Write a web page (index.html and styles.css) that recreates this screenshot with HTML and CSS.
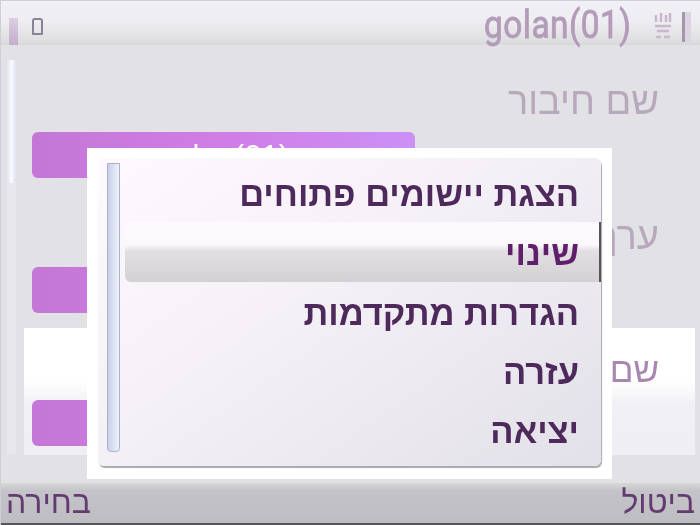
FILE: index.html
```html
<!DOCTYPE html>
<html lang="he">
<head>
<meta charset="utf-8">
<title>Menu</title>
<link rel="stylesheet" href="styles.css">
</head>
<body>
<div class="screen">
  <header class="topbar">
    <div class="top-left">
      <span class="signal"></span>
      <span class="lock"></span>
    </div>
    <div class="top-right">
      <span class="title">golan(01)</span>
      <svg class="net" viewBox="0 0 20 30" width="20" height="30">
        <path d="M3 3v7M8 1v9M13 3v7M17 1v9M2 14h16M4 19h12M3 25h5M11 25h6" fill="none" stroke="#c9b8cc" stroke-width="2.5"/>
      </svg>
      <span class="battery"></span>
    </div>
  </header>
  <main class="content">
    <div class="scroll"><div class="scroll-thumb"></div></div>
    <div class="form">
      <div class="row row-first">
        <div class="label">שם חיבור</div>
        <div class="field">golan(01)</div>
      </div>
      <div class="row">
        <div class="label">ערך</div>
        <div class="field"></div>
      </div>
      <div class="row row-active">
        <div class="label">שם</div>
        <div class="field"></div>
      </div>
    </div>
  </main>
  <footer class="softkeys">
    <span>בחירה</span>
    <span>ביטול</span>
  </footer>
  <div class="popup">
    <div class="panel">
      <div class="pop-scroll"></div>
      <ul class="menu">
        <li>הצגת יישומים פתוחים</li>
        <li class="selected">שינוי</li>
        <li>הגדרות מתקדמות</li>
        <li>עזרה</li>
        <li>יציאה</li>
      </ul>
    </div>
  </div>
</div>
</body>
</html>
```
FILE: styles.css
```css
* { box-sizing: border-box; }
html, body { margin: 0; padding: 0; }
body { width: 700px; height: 525px; overflow: hidden; font-family: "Liberation Sans", "DejaVu Sans", sans-serif; }
.screen { position: relative; width: 700px; height: 525px; display: flex; flex-direction: column; background: #e2e2e6; border-top: 1px solid #d0d0d4; border-left: 1px solid #cfcfd3; overflow: hidden; filter: blur(.5px); }
.topbar { height: 44px; display: flex; justify-content: space-between; background: linear-gradient(#f1f1f5 0, #eeeef2 45%, #dfdfe2 90%, #d8d8da 100%); flex: none; }
.top-left { display: flex; align-items: flex-start; gap: 14px; padding: 17px 0 0 8px; }
.signal { width: 9px; height: 27px; background: linear-gradient(#dccfe2, #c2aecb); }
.lock { width: 11px; height: 17px; border: 2px solid #8d7f94; border-radius: 3px 3px 1px 1px; }
.top-right { display: flex; align-items: flex-start; }
.title { font: 400 38px/1 "Liberation Sans Narrow", "Roboto", sans-serif; color: #b39bb9; margin-top: 5px; transform: scaleX(.88); transform-origin: right; letter-spacing: .5px; -webkit-text-stroke: .8px #b39bb9; }
.net { margin: 11px 0 0 22px; }
.battery { width: 9px; height: 30px; margin: 11px 9px 0 9px; background: linear-gradient(90deg, #a596aa 0 35%, #dcd4e0 35%); }
.content { flex: 1; display: flex; min-height: 0; padding-left: 6px; }
.scroll { width: 9px; margin-top: 15px; height: 394px; background: #e8e8ec; flex: none; }
.scroll-thumb { height: 123px; background: linear-gradient(90deg, #e3e5f0, #fafbff 50%, #dfe3f2); border-radius: 3px; }
.form { flex: 1; display: flex; flex-direction: column; padding: 0 5px 0 8px; }
.row { height: 150px; padding: 34px 36px 0 8px; }
.row-first { height: 134px; padding-top: 33px; }
.row-active { background: linear-gradient(#fff 0, #fff 42%, #f1f0f5 60%, #efeef3 100%); height: 127px; padding-top: 18px; margin-top: -1px; }
.label { height: 33px; font-size: 38px; line-height: 47px; direction: rtl; color: #b8a8bc; text-align: right; }
.row-active .label { color: #a888b0; font-size: 35px; }
.field { width: 383px; height: 46px; margin-top: 21px; border-radius: 6px; background: linear-gradient(90deg, #c477d6, #d07de6 50%, #cb90f6); color: #fff; font-size: 31px; text-align: center; line-height: 50px; overflow: hidden; }
.softkeys { height: 42px; flex: none; display: flex; justify-content: space-between; padding: 0 5px; background: linear-gradient(#d8d8da, #c4c4c8 20%, #bebec2); border-bottom: 2px solid #555; color: #633a72; font-size: 32px; line-height: 39px; direction: ltr; }
.popup { position: absolute; left: 86px; top: 147px; width: 525px; height: 331px; background: #fff; padding: 10px 11px 13px 11px; }
.panel { height: 100%; border-radius: 6px; display: flex; gap: 5px; padding: 5px 0 0 9px; background: linear-gradient(145deg, #fdf9fe 0, #f5f1f7 40%, #e2e0e8 100%); box-shadow: 1px 2px 1px #a9a8ae; }
.pop-scroll { width: 13px; height: 289px; flex: none; border: 1px solid #a9b0c8; border-radius: 0 0 4px 4px; background: linear-gradient(90deg, #c8d0e8, #eef1fb); }
.menu { list-style: none; margin: 0; padding: 0; flex: 1; direction: rtl; color: #4e2a5c; font-size: 34.5px; font-weight: 700; }
.menu li { height: 59px; line-height: 55px; padding: 4px 22px 0 0; }
.menu .selected { height: 60px; color: #5f1f6a; border-right: 2px solid #555; padding-right: 20px; background: linear-gradient(#fdf9fe 0, #fbf8fc 38%, #e2e0e2 48%, #d2d0d3 100%); border-radius: 0 0 0 6px; }
```
